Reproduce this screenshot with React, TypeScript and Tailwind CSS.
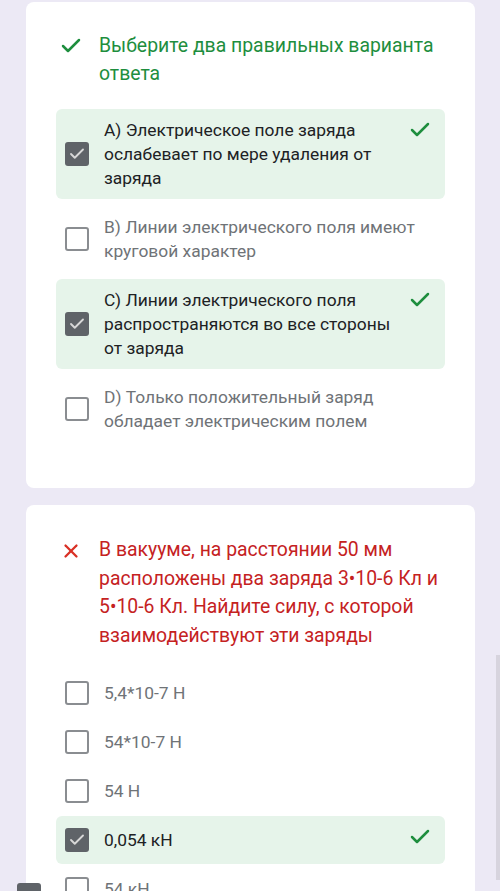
import { Check, X } from "lucide-react";

type Option = { text: string; checked?: boolean };

const q1: Option[] = [
  { text: "A) Электрическое поле заряда ослабевает по мере удаления от заряда", checked: true },
  { text: "B) Линии электрического поля имеют круговой характер" },
  { text: "C) Линии электрического поля распространяются во все стороны от заряда", checked: true },
  { text: "D) Только положительный заряд обладает электрическим полем" },
];

const q2: Option[] = [
  { text: "5,4*10-7 Н" },
  { text: "54*10-7 Н" },
  { text: "54 Н" },
  { text: "0,054 кН", checked: true },
  { text: "54 кН" },
];

function Box({ checked }: { checked?: boolean }) {
  if (checked) {
    return (
      <div className="w-6 h-6 shrink-0 rounded-[3px] bg-[#5f6368] flex items-center justify-center">
        <Check className="w-[18px] h-[18px] shrink-0 text-[#d7d7d7]" strokeWidth={2.5} />
      </div>
    );
  }
  return <div className="w-6 h-6 shrink-0 rounded-[3px] border-2 border-[#8a8d91]" />;
}

function Row({ opt }: { opt: Option }) {
  return (
    <div
      className={
        opt.checked
          ? "flex items-center min-h-[48px] py-[9px] pl-[9px] pr-[13px] rounded-md bg-[#e6f4ea]"
          : "flex items-center min-h-[48px] py-[9px] pl-[9px] pr-[13px] rounded-md"
      }
    >
      <Box checked={opt.checked} />
      <div
        className={
          opt.checked
            ? "ml-[15px] flex-1 text-[17.4px] leading-6 text-[#202124]"
            : "ml-[15px] flex-1 text-[17.4px] leading-6 text-[#6f7377]"
        }
      >
        {opt.text}
      </div>
      {opt.checked && (
        <Check className="ml-[4px] self-start shrink-0 w-[24px] h-[24px] text-[#1e8e3e]" strokeWidth={2.5} />
      )}
    </div>
  );
}

export default function App() {
  return (
    <div className="relative h-[891px] overflow-hidden bg-[#ece9f5] font-['Roboto',sans-serif]">
      <div className="flex flex-col gap-[17px] pl-[26px] pr-[25px] pt-[2px] w-[500px]">
        {/* Вопрос 1 */}
        <div className="bg-white rounded-lg px-[30px] pt-[30px] pb-[46px]">
          <div className="flex items-start">
            <Check className="mt-[2px] ml-[3px] shrink-0 w-[24px] h-[24px] text-[#1e8e3e]" strokeWidth={2.5} />
            <div className="ml-[16px] text-[19.4px] leading-[28px] text-[#1e8e3e]">
              Выберите два правильных варианта ответа
            </div>
          </div>
          <div className="mt-[21px] flex flex-col gap-[7px]">
            {q1.map((o) => (
              <Row key={o.text} opt={o} />
            ))}
          </div>
        </div>

        {/* Вопрос 2 */}
        <div className="bg-white rounded-lg px-[30px] pt-[31px] pb-[40px]">
          <div className="flex items-start">
            <X className="mt-[4px] ml-[4px] shrink-0 w-[22px] h-[22px] text-[#d93025]" strokeWidth={2.5} />
            <div className="ml-[17px] text-[19.4px] leading-[28.5px] text-[#c5221f]">
              В вакууме, на расстоянии 50 мм расположены два заряда 3•10-6 Кл и 5•10-6 Кл. Найдите силу, с которой взаимодействуют эти заряды
            </div>
          </div>
          <div className="mt-[19px] flex flex-col gap-px">
            {q2.map((o) => (
              <Row key={o.text} opt={o} />
            ))}
          </div>
        </div>
      </div>

      {/* полоса прокрутки */}
      <div className="absolute right-0 top-[655px] w-[4px] h-[225px] bg-[#d7d4de]" />
      {/* плавающая кнопка */}
      <div className="absolute left-[17px] top-[883px] w-[24px] h-[20px] rounded-[3px] bg-[#5f6368]" />
    </div>
  );
}
